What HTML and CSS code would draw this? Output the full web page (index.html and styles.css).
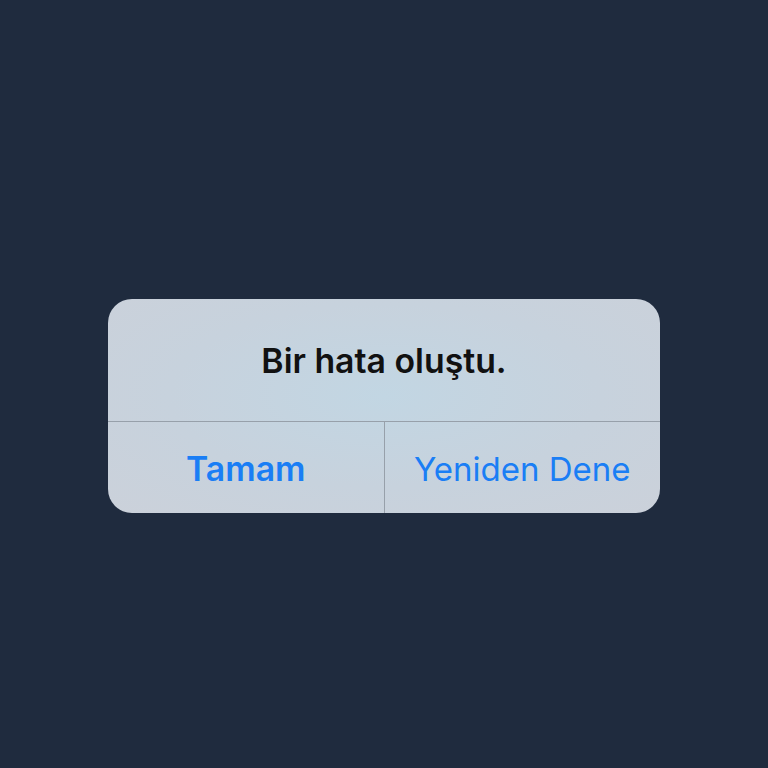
FILE: index.html
```html
<!DOCTYPE html>
<html lang="tr">
<head>
    <meta charset="UTF-8">
    <meta name="viewport" content="width=device-width, initial-scale=1.0">
    <title>Hata</title>
    <link rel="stylesheet" href="styles.css">
</head>
<body>
    <div class="screen">
        <div class="alert">
            <div class="alert-title">Bir hata oluştu.</div>
            <div class="alert-actions">
                <button class="btn btn-primary">Tamam</button>
                <button class="btn">Yeniden Dene</button>
            </div>
        </div>
    </div>
</body>
</html>
```

FILE: styles.css
```css
/* Genel */
* {
    margin: 0;
    padding: 0;
    box-sizing: border-box;
}

body {
    background-color: #1f2b3e;
    font-family: 'Inter', 'Noto Sans', sans-serif;
}

.screen {
    height: 768px;
    display: flex;
    align-items: center;
    justify-content: center;
    padding-top: 44px;
}

/* Uyarı kutusu */
.alert {
    width: 552px;
    background: radial-gradient(ellipse at 50% 45%, #c2d6e3 0%, #c7d2dd 55%, #cbd1da 100%);
    border-radius: 24px;
    overflow: hidden;
}

.alert-title {
    height: 123px;
    display: flex;
    align-items: center;
    justify-content: center;
    font-size: 33.8px;
    font-weight: 600;
    color: #111;
    border-bottom: 1px solid #97a0aa;
}

.alert-actions {
    display: flex;
    height: 91px;
}

.btn {
    flex: 1;
    background: none;
    border: none;
    font-family: inherit;
    font-size: 33px;
    color: #1a7ef5;
    padding-top: 2px;
}

.btn + .btn {
    border-left: 1px solid #97a0aa;
}

.btn-primary {
    font-size: 33.8px;
    font-weight: 600;
}
```
